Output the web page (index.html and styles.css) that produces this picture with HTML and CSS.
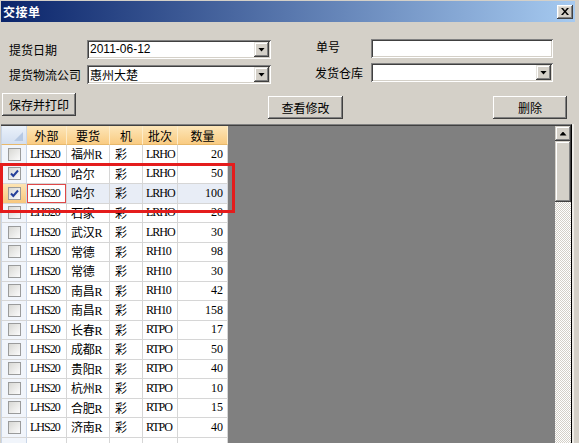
FILE: index.html
```html
<!DOCTYPE html>
<html>
<head>
<meta charset="utf-8">
<link rel="stylesheet" href="styles.css">
</head>
<body>
<div class="window">
  <div class="titlebar">
    <span class="title">交接单</span>
    <span class="close"><svg width="8" height="7" viewBox="0 0 8 7"><path d="M0 0h2l2 2.4L6 0h2L5 3.5 8 7H6L4 4.6 2 7H0l3-3.5z" fill="#000"/></svg></span>
  </div>

  <div class="form">
    <div class="fgroup left">
      <label>提货日期</label>
      <div class="combo"><span class="val num">2011-06-12</span><span class="drop"><i></i></span></div>
      <label>提货物流公司</label>
      <div class="combo"><span class="val">惠州大楚</span><span class="drop"><i></i></span></div>
    </div>
    <div class="fgroup right">
      <label class="l-no">单号</label>
      <div class="field"></div>
      <label>发货仓库</label>
      <div class="combo"><span class="val"></span><span class="drop"><i></i></span></div>
    </div>
  </div>

  <div class="buttons">
    <button class="btn b1">保存并打印</button>
    <button class="btn b2">查看修改</button>
    <button class="btn b3">删除</button>
  </div>

  <div class="grid">
    <div class="grid-body">
      <div class="table">
        <div class="row head">
          <div class="c h hk"><span class="tri"></span></div>
          <div class="c h">外部</div>
          <div class="c h">要货</div>
          <div class="c h">机</div>
          <div class="c h">批次</div>
          <div class="c h">数量</div>
        </div>
        <div class="row"><div class="c k"><span class="cb"></span></div><div class="c p1">LHS20</div><div class="c p2">福州R</div><div class="c p3">彩</div><div class="c p1">LRHO</div><div class="c n">20</div></div>
        <div class="row"><div class="c k"><span class="cb"><svg width="11" height="11" viewBox="0 0 11 11"><path d="M2 5.5l2.3 2.5L9 2.5" fill="none" stroke="#26409a" stroke-width="2"/></svg></span></div><div class="c p1">LHS20</div><div class="c p2">哈尔</div><div class="c p3">彩</div><div class="c p1">LRHO</div><div class="c n">50</div></div>
        <div class="row sel"><div class="c k"><span class="cb"><svg width="11" height="11" viewBox="0 0 11 11"><path d="M2 5.5l2.3 2.5L9 2.5" fill="none" stroke="#26409a" stroke-width="2"/></svg></span></div><div class="c p1 focus">LHS20</div><div class="c p2">哈尔</div><div class="c p3">彩</div><div class="c p1">LRHO</div><div class="c n">100</div></div>
        <div class="row"><div class="c k"><span class="cb"></span></div><div class="c p1">LHS20</div><div class="c p2">石家</div><div class="c p3">彩</div><div class="c p1">LRHO</div><div class="c n">20</div></div>
        <div class="row"><div class="c k"><span class="cb"></span></div><div class="c p1">LHS20</div><div class="c p2">武汉R</div><div class="c p3">彩</div><div class="c p1">LRHO</div><div class="c n">30</div></div>
        <div class="row"><div class="c k"><span class="cb"></span></div><div class="c p1">LHS20</div><div class="c p2">常德</div><div class="c p3">彩</div><div class="c p1">RH10</div><div class="c n">98</div></div>
        <div class="row"><div class="c k"><span class="cb"></span></div><div class="c p1">LHS20</div><div class="c p2">常德</div><div class="c p3">彩</div><div class="c p1">RH10</div><div class="c n">30</div></div>
        <div class="row"><div class="c k"><span class="cb"></span></div><div class="c p1">LHS20</div><div class="c p2">南昌R</div><div class="c p3">彩</div><div class="c p1">RH10</div><div class="c n">42</div></div>
        <div class="row"><div class="c k"><span class="cb"></span></div><div class="c p1">LHS20</div><div class="c p2">南昌R</div><div class="c p3">彩</div><div class="c p1">RH10</div><div class="c n">158</div></div>
        <div class="row"><div class="c k"><span class="cb"></span></div><div class="c p1">LHS20</div><div class="c p2">长春R</div><div class="c p3">彩</div><div class="c p1">RTPO</div><div class="c n">17</div></div>
        <div class="row"><div class="c k"><span class="cb"></span></div><div class="c p1">LHS20</div><div class="c p2">成都R</div><div class="c p3">彩</div><div class="c p1">RTPO</div><div class="c n">50</div></div>
        <div class="row"><div class="c k"><span class="cb"></span></div><div class="c p1">LHS20</div><div class="c p2">贵阳R</div><div class="c p3">彩</div><div class="c p1">RTPO</div><div class="c n">40</div></div>
        <div class="row"><div class="c k"><span class="cb"></span></div><div class="c p1">LHS20</div><div class="c p2">杭州R</div><div class="c p3">彩</div><div class="c p1">RTPO</div><div class="c n">10</div></div>
        <div class="row"><div class="c k"><span class="cb"></span></div><div class="c p1">LHS20</div><div class="c p2">合肥R</div><div class="c p3">彩</div><div class="c p1">RTPO</div><div class="c n">15</div></div>
        <div class="row"><div class="c k"><span class="cb"></span></div><div class="c p1">LHS20</div><div class="c p2">济南R</div><div class="c p3">彩</div><div class="c p1">RTPO</div><div class="c n">40</div></div>
        <div class="row"><div class="c k"></div><div class="c p1"></div><div class="c p2"></div><div class="c p3"></div><div class="c p1"></div><div class="c n"></div></div>
      </div>
      <div class="filler"></div>
      <div class="vscroll">
        <div class="sb-up"><i></i></div>
        <div class="sb-thumb"></div>
        <div class="sb-track"></div>
      </div>
    </div>
  </div>

  <div class="mark"></div>
</div>
</body>
</html>
```

FILE: styles.css
```css
body {
  margin: 0;
}

.window {
  width: 579px;
  height: 443px;
  box-sizing: border-box;
  padding: 1px 4px 0 1px;
  background: #d4d0c8;
  position: relative;
  overflow: hidden;
  display: flex;
  flex-direction: column;
  font-family: "Noto Sans CJK SC", sans-serif;
  font-size: 12px;
  color: #000;
}

/* title bar */
.titlebar {
  flex: none;
  height: 21px;
  display: flex;
  align-items: center;
  justify-content: space-between;
  padding: 0 2px;
  background: linear-gradient(to right, #0a246a, #a6caf0);
}

.title {
  color: #fff;
  font-weight: bold;
  font-size: 12px;
  letter-spacing: 0.5px;
  line-height: 1;
}

.close {
  width: 16px;
  height: 14px;
  display: flex;
  align-items: center;
  justify-content: center;
  background: #d4d0c8;
  box-shadow: inset -1px -1px #404040, inset 1px 1px #fff, inset -2px -2px #808080, inset 2px 2px #e4e2dc;
}

/* form */
.form {
  flex: none;
  display: flex;
  align-items: flex-start;
  margin-top: 17px;
}

.fgroup {
  display: grid;
  grid-auto-rows: 19px;
  align-items: center;
}

.left {
  margin-left: 8px;
  margin-top: 1px;
  grid-template-columns: 78px 184px;
  row-gap: 6px;
}

.right {
  margin-left: 44px;
  grid-template-columns: 56px 182px;
  row-gap: 5px;
}

.fgroup label {
  line-height: 19px;
  white-space: nowrap;
}

.l-no {
  padding-left: 1px;
  position: relative;
  top: -2px;
}

.combo,
.field {
  display: flex;
  box-sizing: border-box;
  height: 19px;
  padding: 2px;
  background: #fff;
  box-shadow: inset 1px 1px #808080, inset -1px -1px #fff, inset 2px 2px #404040, inset -2px -2px #d4d0c8;
}

.val {
  flex: 1;
  line-height: 15px;
  padding-left: 1px;
  white-space: nowrap;
  overflow: hidden;
}

.num {
  font-family: "Liberation Sans", sans-serif;
}

.drop {
  width: 15px;
  height: 15px;
  display: flex;
  align-items: center;
  justify-content: center;
  background: #d4d0c8;
  box-shadow: inset -1px -1px #404040, inset 1px 1px #e4e2dc, inset -2px -2px #808080, inset 2px 2px #fff;
}

.drop i,
.sb-up i {
  display: block;
  width: 7px;
  height: 4px;
  background: #000;
  clip-path: polygon(0 0, 100% 0, 50% 100%);
}

.sb-up i {
  clip-path: polygon(50% 0, 100% 100%, 0 100%);
}

/* buttons */
.buttons {
  flex: none;
  display: flex;
  align-items: flex-start;
  margin-top: 9px;
}

.btn {
  height: 23px;
  border: 0;
  padding: 0;
  font: inherit;
  color: #000;
  background: #d4d0c8;
  box-shadow: inset -1px -1px #404040, inset 1px 1px #fff, inset -2px -2px #808080, inset 2px 2px #d4d0c8;
}

.b1 {
  width: 74px;
  margin-left: 1px;
}

.b2 {
  width: 75px;
  margin-left: 192px;
  margin-top: 3px;
}

.b3 {
  width: 74px;
  margin-left: 150px;
  margin-top: 3px;
}

/* grid */
.grid {
  flex: 1;
  min-height: 0;
  margin-top: 5px;
  margin-right: 3px;
  border-top: 1px solid #808080;
  border-right: 1px solid #000;
  box-shadow: 2px 0 0 #efede8;
  display: flex;
  flex-direction: column;
}

.grid-body {
  flex: 1;
  min-height: 0;
  border-top: 1px solid #404040;
  display: flex;
}

.table {
  flex: none;
  width: 227px;
  display: grid;
  grid-template-columns: 26px 40px 43px 33px 35px 50px;
  grid-template-rows: 19px;
  grid-auto-rows: 19.5px;
  align-content: start;
  background: #fff;
  font-family: "Liberation Serif", "Noto Sans CJK SC", serif;
  font-size: 12px;
}

.row {
  display: contents;
}

.c {
  box-sizing: border-box;
  border-right: 1px solid #d6d6d6;
  border-bottom: 1px solid #d6d6d6;
  padding-left: 3px;
  white-space: nowrap;
  overflow: hidden;
  display: flex;
  align-items: center;
}

.p1 {
  padding-left: 3px;
  letter-spacing: -1px;
}

.p2 {
  padding-left: 4px;
  letter-spacing: -0.3px;
}

.p3 {
  padding-left: 5px;
}

.n {
  justify-content: flex-end;
  padding-left: 0;
  padding-right: 4px;
}

.h {
  justify-content: center;
  padding: 0;
  font-family: "Noto Sans CJK SC", sans-serif;
  background: linear-gradient(#fde6b9, #f9cb82);
  border-right: 1px solid #fdecc9;
  border-bottom: 1px solid #e8b86a;
}

.k {
  justify-content: center;
  padding: 0;
  background: #f1f5fb;
  border-right: 1px solid #c9d6e8;
  border-left: 1px solid #c9d6e8;
}

.hk {
  position: relative;
  background: linear-gradient(#eaf1fa, #d2def0);
  border-right: 1px solid #c9d6e8;
  border-left: 1px solid #c9d6e8;
}

.tri {
  position: absolute;
  right: 3px;
  bottom: 3px;
  width: 9px;
  height: 9px;
  background: #b7c9e3;
  clip-path: polygon(100% 0, 100% 100%, 0 100%);
}

.cb {
  width: 13px;
  height: 13px;
  box-sizing: border-box;
  border: 1px solid #9a9b9b;
  background: linear-gradient(135deg, #d8d8d4, #fbfbfb);
  display: flex;
  align-items: center;
  justify-content: center;
}

.sel > .c {
  background: #e8edf6;
}

.sel > .k {
  background: linear-gradient(#fde4b3, #f8c77c);
}

.sel > .focus {
  background: #fff;
  box-shadow: inset 0 0 0 1px #e04848;
}

.filler {
  flex: 1;
  background: #808080;
}

/* scrollbar */
.vscroll {
  flex: none;
  width: 16px;
  display: flex;
  flex-direction: column;
}

.sb-up {
  flex: none;
  height: 15px;
  display: flex;
  align-items: center;
  justify-content: center;
  background: #d4d0c8;
  box-shadow: inset -1px -1px #404040, inset 1px 1px #d4d0c8, inset -2px -2px #808080, inset 2px 2px #fff;
}

.sb-thumb {
  flex: none;
  height: 61px;
  background: #d4d0c8;
  box-shadow: inset -1px -1px #404040, inset 1px 1px #d4d0c8, inset -2px -2px #808080, inset 2px 2px #fff;
}

.sb-track {
  flex: 1;
  background: repeating-conic-gradient(#d4d0c8 0 25%, #fff 0 50%) 0 0 / 2px 2px;
}

/* red annotation frame */
.mark {
  position: absolute;
  left: 0;
  top: 163px;
  width: 235px;
  height: 50px;
  box-sizing: border-box;
  border: 3px solid #e41c1c;
  pointer-events: none;
}
```
